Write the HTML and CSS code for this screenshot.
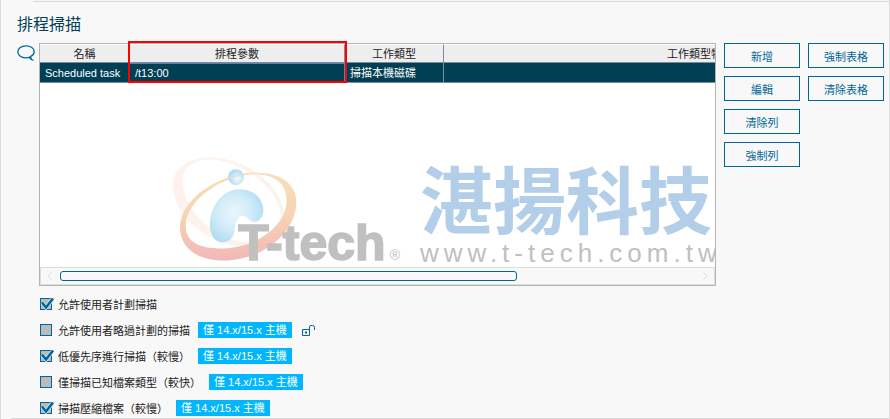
FILE: index.html
```html
<!DOCTYPE html>
<html lang="zh-Hant">
<head>
    <meta charset="UTF-8">
    <meta name="viewport" content="width=device-width, initial-scale=1.0">
    <title>排程掃描</title>
    <link rel="stylesheet" href="styles.css">
</head>
<body>
    <main class="panel">
        <hr class="rule rule-top">
        <h2>排程掃描</h2>

        <div class="schedule">
            <svg class="bubble" viewBox="0 0 18 16" fill="none" stroke="#006699" stroke-width="1.3">
                <path d="M12.5 12.2 Q10.8 13 8.5 12.8 C4 12.6 .8 10 .8 6.8 C.8 3.4 4.4 .8 9 .8 C13.6 .8 17.2 3.2 17.2 6.5 C17.2 8.6 15.8 10.4 13.8 11.4 C13.5 13 14 14 15 14.8 C13.8 14.6 12.8 13.6 12.5 12.2Z"/>
            </svg>

            <div class="table-box">
                <div class="table-view">
                    <table>
                        <thead>
                            <tr>
                                <th class="col-name">名稱</th>
                                <th class="col-param">排程參數</th>
                                <th class="col-type">工作類型</th>
                                <th class="col-detail">工作類型特</th>
                            </tr>
                        </thead>
                        <tbody>
                            <tr>
                                <td>Scheduled task</td>
                                <td class="focused">/t13:00</td>
                                <td>掃描本機磁碟</td>
                                <td></td>
                            </tr>
                        </tbody>
                    </table>

                    <div class="watermark">
                        <svg class="logo" viewBox="0 0 780 380">
                            <defs>
                                <linearGradient id="ring" x1="0" y1="0" x2="0" y2="1">
                                    <stop offset="0" stop-color="#f8dfb8"/>
                                    <stop offset=".5" stop-color="#f6d3b4"/>
                                    <stop offset="1" stop-color="#f2b8b8"/>
                                </linearGradient>
                                <radialGradient id="drop" cx=".45" cy=".45" r=".6">
                                    <stop offset="0" stop-color="#eaf6fd"/>
                                    <stop offset=".5" stop-color="#d4edf9"/>
                                    <stop offset="1" stop-color="#aedcf2"/>
                                </radialGradient>
                                <radialGradient id="ball" cx=".6" cy=".6" r=".6">
                                    <stop offset="0" stop-color="#f2fafe"/>
                                    <stop offset="1" stop-color="#a8d8ef"/>
                                </radialGradient>
                            </defs>
                            <path fill="#fdf3ec" fill-rule="evenodd" d="M39 120 C39 65 90 37 150 37 C260 37 375 125 375 225 C375 280 330 306 270 306 C150 306 39 215 39 120Z M68 108 C68 65 105 43 150 43 C245 43 360 130 363 220 C363 262 325 290 270 292 C165 292 68 190 68 108Z"/>
                            <path fill="url(#ring)" fill-rule="evenodd" d="M409 170 C409 262 310 346 190 346 C108 346 60 305 60 248 C60 160 180 83 290 83 C365 83 409 120 409 170Z M380 165 C380 240 290 310 180 310 C115 310 77 288 77 242 C77 165 190 87 285 87 C345 87 380 117 380 165Z"/>
                            <circle cx="228" cy="96" r="24" fill="url(#ball)"/>
                            <path fill="none" stroke="#f6d9b4" stroke-width="3" d="M190 105 Q220 92 265 86"/>
                            <path fill="url(#drop)" d="M150 240 C150 180 190 132 240 132 C280 132 310 160 310 195 C310 215 297 230 283 230 C268 230 262 212 248 212 C230 212 226 235 224 255 C220 280 205 291 188 291 C165 291 150 270 150 240Z"/>
                            <text class="logo-name" x="235" y="344">T-tech</text>
                            <text class="logo-mark" x="689" y="346">®</text>
                        </svg>
                        <div class="brand">
                            <div class="brand-name">湛揚科技</div>
                            <div class="brand-url">www.t-tech.com.tw</div>
                        </div>
                    </div>
                </div>

                <div class="scrollbar">
                    <svg class="arrow" viewBox="0 0 5 8"><path d="M4.5 .5 L1 4 L4.5 7.5"/></svg>
                    <div class="track"><div class="thumb"></div></div>
                    <svg class="arrow" viewBox="0 0 5 8"><path d="M.5 .5 L4 4 L.5 7.5"/></svg>
                </div>
                <div class="highlight"></div>
            </div>

            <div class="buttons">
                <button type="button">新增</button>
                <button type="button">強制表格</button>
                <button type="button">編輯</button>
                <button type="button">清除表格</button>
                <button type="button" class="first">清除列</button>
                <button type="button" class="first">強制列</button>
            </div>
        </div>

        <div class="options">
            <div class="option">
                <input type="checkbox" id="allow-plan" checked>
                <label for="allow-plan">允許使用者計劃掃描</label>
            </div>
            <div class="option">
                <input type="checkbox" id="allow-skip">
                <label for="allow-skip">允許使用者略過計劃的掃描</label>
                <span class="badge">僅 14.x/15.x 主機</span>
                <svg class="lock" viewBox="0 0 13 12" fill="none" stroke="#006699">
                    <path d="M.5 4.5 H7.5 V10.5 H.5Z M7.5 4.5 V2 Q7.5 .5 9 .5 H10.5 Q12.5 .5 12.5 2.5 V5"/>
                    <path d="M3 7.5 H5" stroke-width="2"/>
                </svg>
            </div>
            <div class="option">
                <input type="checkbox" id="low-priority" checked>
                <label for="low-priority">低優先序進行掃描（較慢）</label>
                <span class="badge">僅 14.x/15.x 主機</span>
            </div>
            <div class="option">
                <input type="checkbox" id="known-types">
                <label for="known-types">僅掃描已知檔案類型（較快）</label>
                <span class="badge">僅 14.x/15.x 主機</span>
            </div>
            <div class="option">
                <input type="checkbox" id="archives" checked>
                <label for="archives">掃描壓縮檔案（較慢）</label>
                <span class="badge">僅 14.x/15.x 主機</span>
            </div>
        </div>
        <hr class="rule rule-bottom">
    </main>
</body>
</html>
```
FILE: styles.css
```css
* {
    box-sizing: border-box;
}

body {
    margin: 0;
    background-color: #f8f8f8;
    color: #222;
    font-family: "Liberation Sans", "Noto Sans CJK TC", sans-serif;
    font-size: 11px;
}

.panel {
    border-left: 1px solid #ddd;
    border-right: 1px solid #ddd;
    padding-top: 1px;
}

.rule {
    height: 1px;
    margin: 0;
    border: none;
    background-color: #d8d8d8;
}

.rule-top {
    margin-left: 32px;
}

.rule-bottom {
    margin: 2px 0 0 10px;
}

h2 {
    margin: 0;
    padding: 13px 16px 8px;
    color: #003f54;
    font-size: 16px;
    font-weight: normal;
    line-height: 20px;
}

/* Table with its buttons */
.schedule {
    display: flex;
    align-items: flex-start;
    padding: 0 5px 0 16px;
}

.bubble {
    flex: none;
    width: 18px;
    height: 16px;
    margin: 2px 4px 0 0;
}

.table-box {
    position: relative;
    flex: 1;
    min-width: 0;
    border: 1px solid #b4b4b4;
    background-color: #fff;
}

.table-view {
    position: relative;
    height: 223px;
    overflow: hidden;
}

table {
    width: 906px;
    table-layout: fixed;
    border-collapse: separate;
    border-spacing: 0;
}

th,
td {
    padding: 0 5px;
    border-right: 1px solid #7c8c99;
    border-bottom: 1px solid #7c8c99;
    font-weight: normal;
    white-space: nowrap;
}

th {
    height: 19px;
    padding-top: 1px;
    border-top: 1px solid #fff;
    background-color: #eee;
    line-height: 16px;
}

td {
    height: 20px;
    padding-top: 1px;
    background-color: #003f54;
    color: #fff;
    line-height: 18px;
}

.focused {
    padding-top: 0;
    border-top: 1px solid #5b7fb5;
    border-right-color: #5b7fb5;
}

.col-name {
    width: 90px;
}

.col-param {
    width: 215px;
}

.col-type {
    width: 99px;
}

.highlight {
    position: absolute;
    top: -3px;
    left: 88px;
    width: 219px;
    height: 42px;
    border: 2px solid #f00;
}

.watermark {
    position: absolute;
    top: 101px;
    left: 120px;
    display: flex;
}

.logo {
    flex: none;
    width: 260px;
    height: 127px;
}

.logo-name {
    fill: #c0c0c0;
    stroke: #c0c0c0;
    stroke-width: 5px;
    font-size: 150px;
    font-weight: bold;
}

.logo-mark {
    fill: #c0c0c0;
    font-size: 42px;
}

.brand {
    padding-top: 22px;
    white-space: nowrap;
}

.brand-name {
    color: #b3cee8;
    font-size: 73px;
    font-weight: bold;
    line-height: 72px;
}

.brand-url {
    color: #c0c0c0;
    font-size: 26px;
    letter-spacing: 5px;
    line-height: 28px;
}

.scrollbar {
    display: flex;
    align-items: center;
    height: 18px;
    padding: 0 6px;
    border: 1px solid #ddd;
    background-color: #f8f8f8;
}

.arrow {
    flex: none;
    width: 5px;
    height: 8px;
    fill: none;
    stroke: #ddd;
}

.track {
    flex: 1;
    margin: 0 8px;
}

.thumb {
    width: 72%;
    height: 10px;
    border: 1px solid #006699;
    border-radius: 3px;
}

.buttons {
    display: grid;
    grid-template-columns: 76px 76px;
    gap: 8px;
    margin-left: 8px;
}

button {
    height: 25px;
    padding: 0;
    border: 1px solid #006699;
    background-color: #f8f8f8;
    color: #006699;
    font-family: inherit;
    font-size: 11px;
    cursor: pointer;
}

button.first {
    grid-column: 1;
}

/* Options */
.options {
    display: flex;
    flex-direction: column;
    gap: 10px;
    padding: 10px 5px 0 39px;
}

.option {
    display: flex;
    align-items: center;
    height: 16px;
}

input[type="checkbox"] {
    appearance: none;
    position: relative;
    width: 12px;
    height: 12px;
    margin: 0 6px 0 0;
    border: 1px solid #006699;
    background-color: #bbb;
}

input[type="checkbox"]:checked::after {
    content: "";
    position: absolute;
    top: -1px;
    left: -1px;
    width: 14px;
    height: 12px;
    background-image: url("data:image/svg+xml,%3Csvg xmlns='http://www.w3.org/2000/svg' viewBox='0 0 14 12'%3E%3Cpath d='M2 4.5L6 9.5L13 .5' fill='none' stroke='%23dde6ec' stroke-width='4'/%3E%3Cpath d='M2 4.5L6 9.5L13 .5' fill='none' stroke='%23006699' stroke-width='2.6'/%3E%3C/svg%3E");
}

label {
    padding-top: 1px;
    line-height: 16px;
}

.badge {
    height: 16px;
    margin-left: 8px;
    padding: 0 5px;
    background-color: #00b7ff;
    color: #fff;
    line-height: 16px;
}

.lock {
    width: 13px;
    height: 12px;
    margin: 2px 0 0 10px;
}
```
